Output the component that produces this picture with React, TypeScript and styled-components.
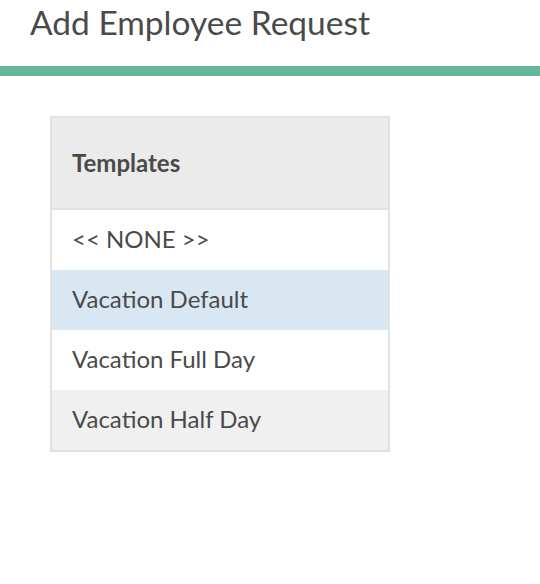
import React, { useState } from "react";
import { styled, createGlobalStyle } from "styled-components";

const GlobalStyle = createGlobalStyle`
    body {
        margin: 0;
        background: #ffffff;
        font-family: Lato, "Open Sans", sans-serif;
        color: #4a4a4a;
    }
`;

const Header = styled.div`
    padding: 0 30px;
    height: 66px;
    box-sizing: border-box;

    h1 {
        margin: 0;
        font-size: 33.5px;
        font-weight: 400;
        line-height: 44px;
        color: #4a4a4a;
    }
`;

const AccentBar = styled.div`
    height: 10px;
    background: #64b89c;
`;

const Content = styled.div`
    padding: 40px 50px;
`;

const TemplateTable = styled.div`
    width: 340px;
    box-sizing: border-box;
    border: 2px solid #e2e2e2;
`;

const TableHead = styled.div`
    height: 92px;
    box-sizing: border-box;
    display: flex;
    align-items: center;
    padding: 0 20px 2px;
    background: #ebebeb;
    border-bottom: 2px solid #e2e2e2;
    font-size: 24px;
    font-weight: 700;
    color: #4a4a4a;
`;

const Row = styled.div<{ $bg: string }>`
    height: 60px;
    box-sizing: border-box;
    display: flex;
    align-items: center;
    padding: 0 20px 4px;
    background: ${(p) => p.$bg};
    font-size: 24px;
    color: #4a4a4a;
    cursor: pointer;
`;

const templates = ["<< NONE >>", "Vacation Default", "Vacation Full Day", "Vacation Half Day"];

export default function App() {
  const [selected, setSelected] = useState(1);

  const rowBg = (i: number) => {
    if (i == selected) return "#d9e7f3";
    if (i % 2 == 1) return "#f0f0f0";
    return "#ffffff";
  };

  return <>
    <GlobalStyle />
    <Header>
      <h1>Add Employee Request</h1>
    </Header>
    <AccentBar />
    <Content>
      <TemplateTable>
        <TableHead>Templates</TableHead>
        {templates.map((t, i) => (
          <Row key={t} $bg={rowBg(i)} onClick={() => setSelected(i)}>{t}</Row>
        ))}
      </TemplateTable>
    </Content>
  </>
}
